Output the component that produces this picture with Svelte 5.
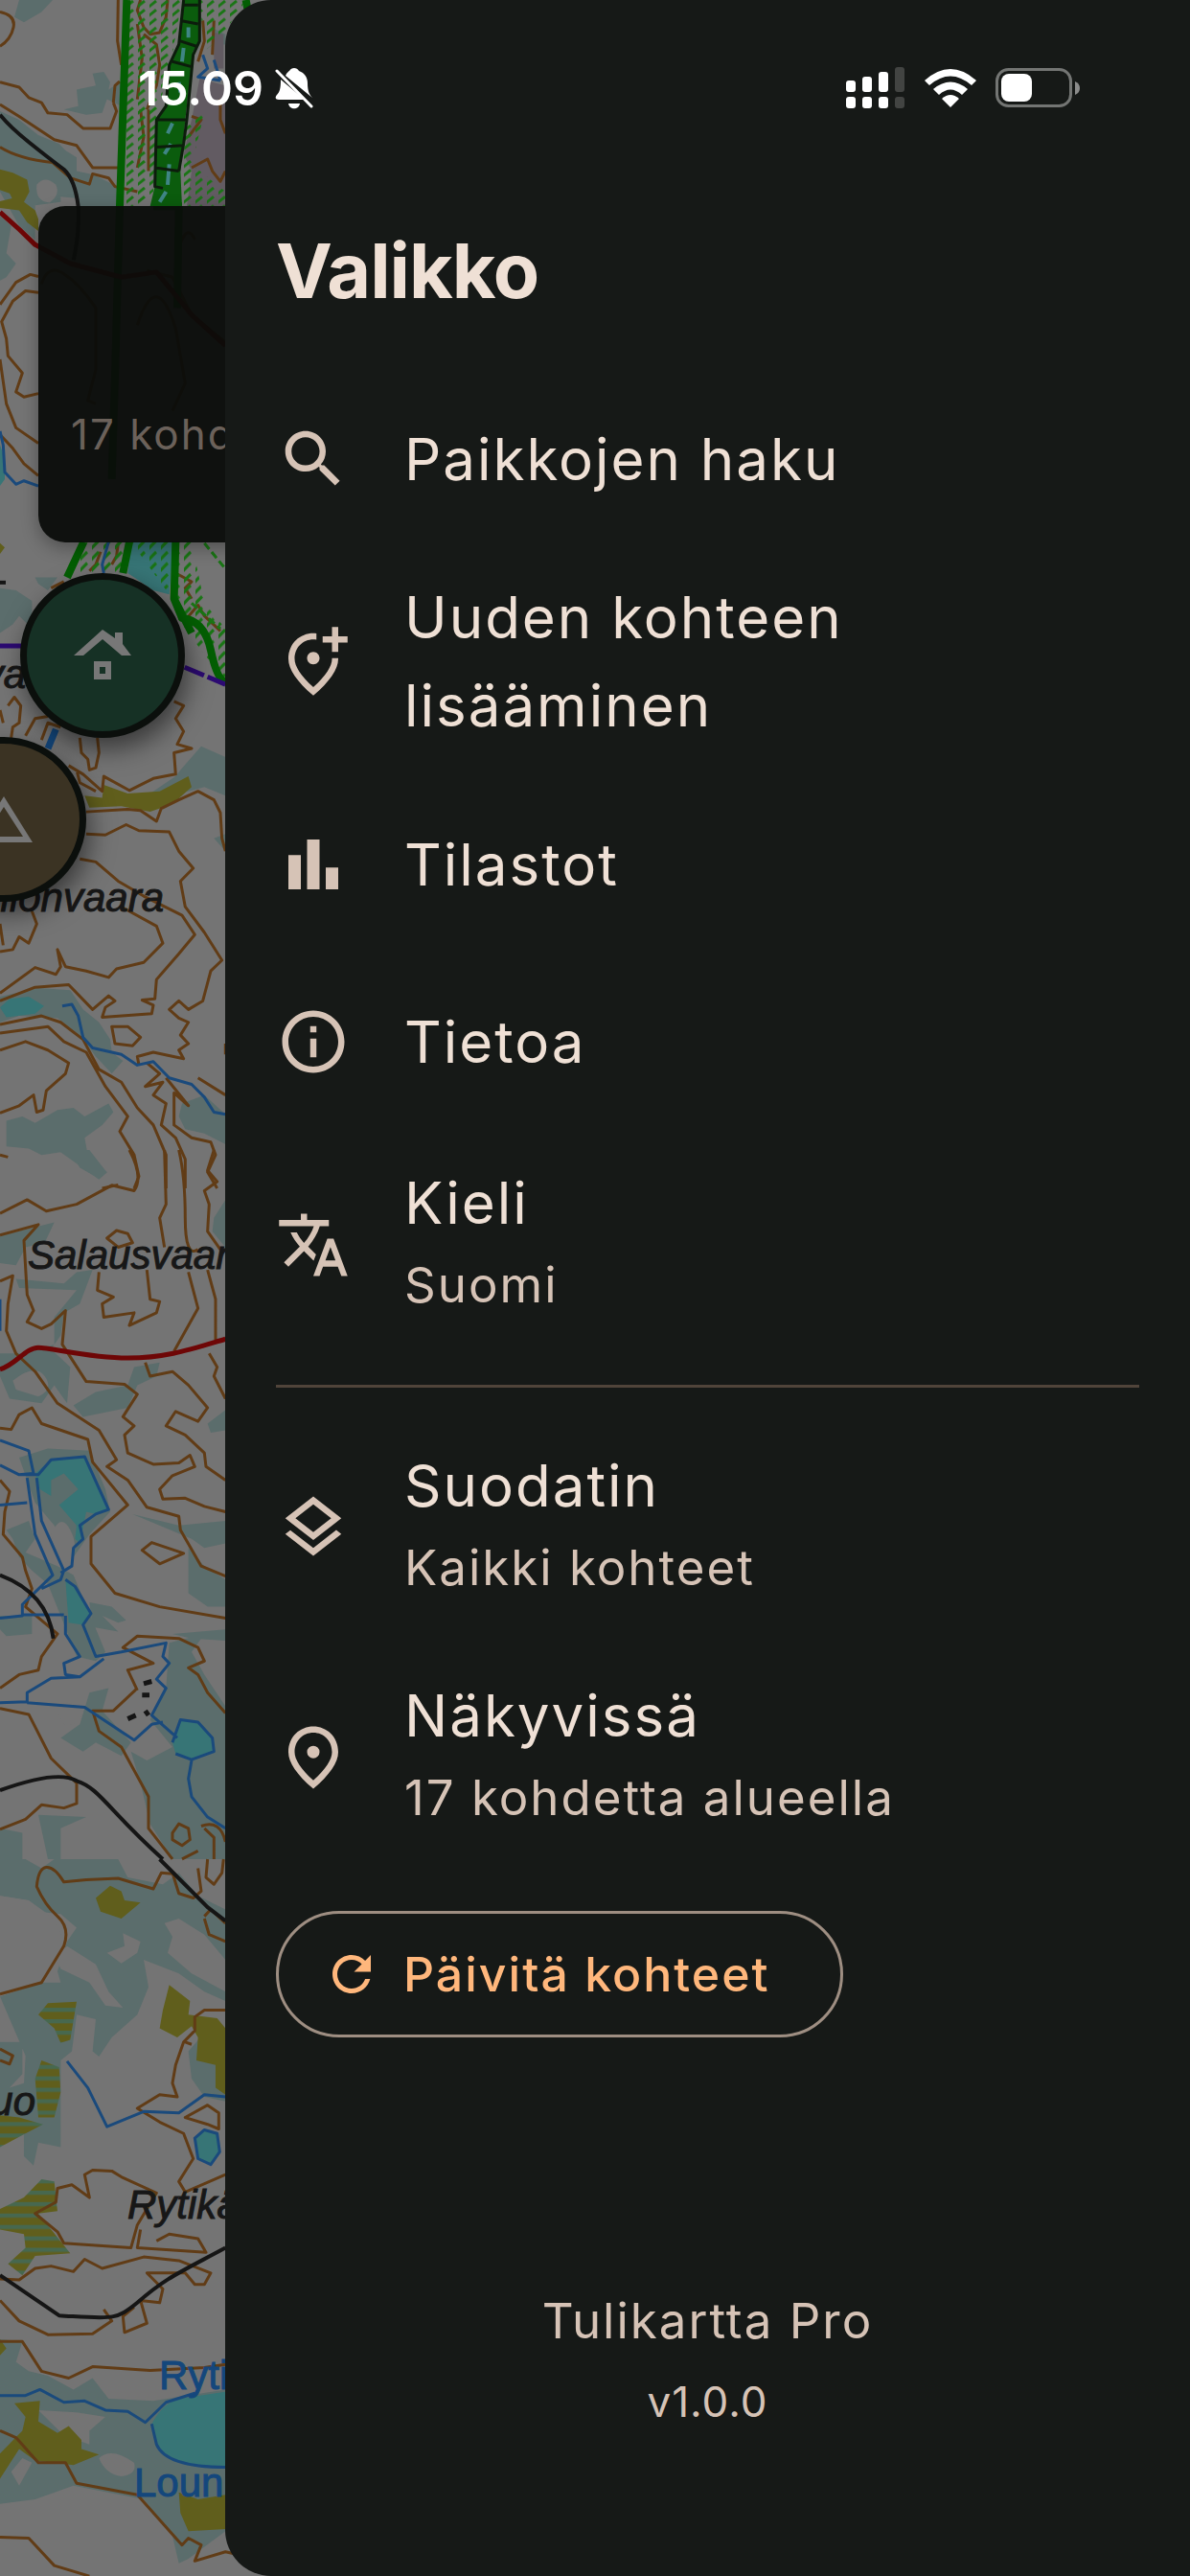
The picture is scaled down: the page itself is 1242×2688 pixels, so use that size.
<script lang="ts">
  interface MenuItem {
    label: string;
    sub?: string;
    icon: string;
  }

  interface MapShape {
    kind: string;
    d: string;
  }

  interface MapTile {
    y: number;
    sy: number;
    shapes: MapShape[];
  }

  const mainItems: MenuItem[] = [
    {
      label: 'Paikkojen haku',
      icon: 'M15.5 14h-.79l-.28-.27C15.41 12.59 16 11.11 16 9.5 16 5.91 13.09 3 9.5 3S3 5.91 3 9.5 5.91 16 9.5 16c1.61 0 3.09-.59 4.23-1.57l.27.28v.79l5 4.99L20.49 19l-4.99-5zm-6 0C7.01 14 5 11.99 5 9.5S7.01 5 9.5 5 14 7.01 14 9.5 11.99 14 9.5 14z'
    },
    {
      label: 'Uuden kohteen lisääminen',
      icon: 'M20 1v3h3v2h-3v3h-2V6h-3V4h3V1h2zm-8 12c1.1 0 2-.9 2-2s-.9-2-2-2-2 .9-2 2 .9 2 2 2zm1-9.94v2.02c-.33-.05-.66-.08-1-.08-3.35 0-6 2.57-6 6.2 0 2.34 1.95 5.44 6 9.14 4.05-3.7 6-6.79 6-9.14V11h2v.2c0 3.32-2.67 7.25-8 11.8-5.33-4.55-8-8.48-8-11.8C4 6.22 7.8 3 12 3c.34 0 .67.02 1 .06z'
    },
    { label: 'Tilastot', icon: 'M4 9h4v11H4zM16 13h4v7h-4zM10 4h4v16h-4z' },
    {
      label: 'Tietoa',
      icon: 'M11 7h2v2h-2zm0 4h2v6h-2zm1-9C6.48 2 2 6.48 2 12s4.48 10 10 10 10-4.48 10-10S17.52 2 12 2zm0 18c-4.41 0-8-3.59-8-8s3.59-8 8-8 8 3.59 8 8-3.59 8-8 8z'
    },
    {
      label: 'Kieli',
      sub: 'Suomi',
      icon: 'M12.87 15.07l-2.54-2.51.03-.03c1.74-1.94 2.98-4.17 3.71-6.53H17V4h-7V2H8v2H1v1.99h11.17C11.5 7.92 10.44 9.75 9 11.35 8.07 10.32 7.3 9.19 6.69 8h-2c.73 1.63 1.73 3.17 2.98 4.56l-5.09 5.02L4 19l5-5 3.11 3.11.76-2.04zM18.5 10h-2L12 22h2l1.12-3h4.75L21 22h2l-4.5-12zm-2.62 7l1.62-4.33L19.12 17h-3.24z'
    }
  ];

  const mapItems: MenuItem[] = [
    {
      label: 'Suodatin',
      sub: 'Kaikki kohteet',
      icon: 'M11.99 18.54l-7.37-5.73L3 14.07l9 7 9-7-1.63-1.27-7.38 5.74zM12 16l7.36-5.73L21 9l-9-7-9 7 1.63 1.27L12 16zm0-11.47L17.74 9 12 13.47 6.26 9 12 4.53z'
    },
    {
      label: 'Näkyvissä',
      sub: '17 kohdetta alueella',
      icon: 'M12 2c4.2 0 8 3.22 8 8.2 0 3.32-2.67 7.25-8 11.8-5.33-4.55-8-8.48-8-11.8C4 5.22 7.8 2 12 2zm6 8.2c0-3.57-2.61-6.2-6-6.2s-6 2.63-6 6.2c0 2.34 1.95 5.44 6 9.14 4.05-3.7 6-6.8 6-9.14zM12 12.2a2 2 0 100-4 2 2 0 000 4z'
    }
  ];

  const refreshIcon =
    'M17.65 6.35C16.2 4.9 14.21 4 12 4c-4.42 0-7.99 3.58-7.99 8s3.57 8 7.99 8c3.73 0 6.84-2.55 7.73-6h-2.08c-.82 2.33-3.04 4-5.65 4-3.31 0-6-2.69-6-6s2.69-6 6-6c1.66 0 3.14.69 4.22 1.78L13 11h7V4l-2.35 2.35z';

  // Map sheets, stacked from north to south. Units are a third of a pixel wide.
  const tiles: MapTile[] = [
    {
      y: 0,
      sy: 0.3571,
      shapes: [
        { kind: 'marsh', d: 'M60 0H165L130 35 75 65 45 50ZM240 262L300 250 290 215 325 210 345 240 340 262 380 238V310L335 290 320 330 270 335 200 320 245 310ZM0 325L60 350 120 395 185 420 205 440 240 460V500L290 510 380 550V603H245L245 580 190 575V590L110 600V700L60 660 0 560ZM0 630L35 660 20 740 50 770 20 810 0 820ZM660 80L706 100V130H680Z' },
        { kind: 'paper', d: 'M115 540Q140 510 175 540Q190 570 155 592Q110 590 115 540Z' },
        { kind: 'rock', d: 'M670 95L700 100V200H670ZM625 230L706 250V603H585L600 500 575 450 600 350Z' },
        { kind: 'field', d: 'M0 495L40 505 85 525 92 560 75 590 110 615 120 640V675L85 650 60 615 0 608V588L38 580 30 565 0 555Z' },
        { kind: 'contour', d: 'M0 35Q50 45 42 80T0 135M370 0L368 120 380 190M440 0L430 30 450 80 470 100 500 95 520 50 525 0M450 100L490 130 500 190 490 250 460 320M430 70L445 170 430 290M355 300L360 250 375 238M0 240L60 255 90 285 130 300 150 330 210 335 260 375 345 375 365 325 355 300M0 305L60 340 170 408 240 425 290 490 375 490M0 430Q60 465 165 475L220 520 280 538 290 508 340 520 360 545 430 560M635 60L640 120 620 180M670 60L665 160M690 290V350L706 390M600 340L630 350 590 400M600 490L650 465 665 500 690 530 706 500M440 320L450 400 430 490M465 320V500' },
        { kind: 'hatch', d: 'M400 0H570L535 180 490 340 480 560 430 603H378ZM625 0H770L720 70 690 110 640 150ZM580 360L640 330 600 480 706 560V603H570Z' },
        { kind: 'contour', d: 'M0 890L50 825 95 802 120 808M120 855L80 850 40 880 5 940 20 990 25 1040 70 1090 50 1145 75 1160 120 1150M0 1050L20 1180 50 1250 120 1295M0 1270L40 1310 75 1355 120 1390' },
        { kind: 'contour', d: 'M130 830Q150 770 200 800T300 900V1080L275 1170 300 1180M430 950Q490 780 550 960L580 1120 540 1200M460 790L540 810 600 920 706 1000M550 760Q580 640 610 700' },
        { kind: 'park', d: 'M397 0L385 330 375 603 360 1100 350 1400M770 0L775 25M480 603H570M560 603L555 900' },
        { kind: 'gorge', d: 'M575 0L560 130 530 190 520 310 490 350 485 545 470 603H570L565 500 580 350 605 150 625 120V0Z' },
        { kind: 'gorgewater', d: 'M590 80V110M575 140L570 180M560 240L565 270M540 360L525 390M535 420L515 450M530 480L525 540M520 560L500 590' },
        { kind: 'cliff', d: 'M575 0L560 130 530 190 520 310 490 350 485 545 510 550M625 0V120L605 160 585 350 575 420 560 500M570 15H620M565 60L620 70M565 120L615 135M540 180L600 195M490 350L585 350M490 430L575 425M485 490L560 500' },
        { kind: 'road', d: 'M0 335Q30 370 90 415T200 495Q235 525 245 603Q250 680 230 760' },
        { kind: 'main', d: 'M0 620L60 670 110 715 220 770 380 810 490 795 600 920 706 1010' },
        { kind: 'stream', d: 'M635 160L650 200 620 225 690 235M670 175L690 235' },
        { kind: 'lake', d: 'M0 1300L15 1340V1400L0 1420Z' },
        { kind: 'stream', d: 'M0 1260L10 1300 15 1380 50 1415 75 1405 120 1420' }
      ]
    },
    {
      y: 540,
      sy: 0.4464,
      shapes: [
        { kind: 'marsh', d: 'M0 165L50 170 100 195V260L60 230 40 250 0 270ZM110 140H180L150 170 120 155ZM565 590L630 535 706 560V650L640 630 590 640 460 650 550 605ZM670 750L706 740V780ZM0 1120L120 1100 220 1105 260 1150 310 1180 345 1220 350 1250 385 1270 350 1300 300 1260 250 1210 180 1170 60 1165 0 1180ZM20 1410L70 1400 110 1415 180 1385 230 1380 265 1400 340 1370 355 1390 320 1420 265 1450 275 1490 335 1530 310 1545 250 1520 220 1480 130 1490 90 1475 20 1470ZM570 1370L640 1350 706 1395V1465L640 1440 580 1430 560 1400Z' },
        { kind: 'field', d: 'M265 650L320 655 325 625 400 645 500 640 590 605 600 630 540 670 470 688 380 675 280 678ZM0 60L15 70 0 85Z' },
        { kind: 'lake', d: 'M410 57H545L530 180 480 170 400 130ZM0 1145L30 1125 90 1120 138 1142 110 1160 20 1168Z' },
        { kind: 'contour', d: 'M160 165L200 150M315 80L300 110 280 125M370 60L365 90 350 110M550 130L600 150 580 165 600 190M580 240L620 205 640 230 690 265' },
        { kind: 'hatch', d: 'M270 57H400L385 130H215ZM410 57H600L640 200 706 260V380L640 320 560 240 530 180Z' },
        { kind: 'park', d: 'M262 57L235 100 210 140M405 57L385 130M550 57L545 190 570 235Q640 240 660 310T706 385M545 190L600 270' },
        { kind: 'parkline', d: 'M640 60L706 120M600 200L690 260' },
        { kind: 'border', d: 'M0 300H66M578 350L706 390' },
        { kind: 'contour', d: 'M25 440L45 420 65 440 60 480 40 490 35 515M80 510L110 470 150 465M130 520L150 480 190 490M0 450L10 480M250 515L255 550 275 565 280 590 300 585 310 550 305 515M545 430L575 440 550 470 575 500 555 530 600 540 545 550 550 600 480 610 405 638 325 605 320 640 260 600 215 580M240 590L250 620 300 640' },
        { kind: 'contour', d: 'M270 688L400 682 440 685 490 710 505 680 560 660 620 640 670 660 690 690 695 750 706 780M270 740L330 742 395 718 435 732 530 735 560 780 605 820 565 850 580 910 640 970 695 1035 660 1060 635 1130 590 1150 560 1130 530 1150 560 1170 590 1180 565 1210 590 1230 560 1245 575 1265 480 1250 430 1260 435 1280' },
        { kind: 'contour', d: 'M250 798L300 805 370 850 450 885 570 930 610 975 560 1020 490 1080 485 1125 445 1128 480 1140 475 1160 320 1168 330 1145 360 1130 340 1118 290 1150 215 1092 110 1098 0 1130M380 910L490 955 510 995 450 1040 365 1055 340 1075 270 1060 205 1050 180 1010 190 1050 175 1068 110 1052 0 1112M100 920L115 950 90 995 60 980 40 1010 0 1015M0 950L10 1000' },
        { kind: 'contour', d: 'M0 1185L130 1165 190 1180 260 1220 310 1290 380 1320 430 1380 480 1420 520 1490V1568M0 1205L150 1190 200 1225 270 1250 330 1330 400 1400 375 1435 420 1490 435 1540 420 1568M0 1245L80 1225 150 1245 215 1275 205 1300 145 1340 135 1385 115 1390 105 1350 60 1375 0 1392M350 1190H400L440 1215 415 1235 360 1230ZM460 1275L500 1300 455 1330 510 1320 480 1350 520 1370 505 1420 550 1450 580 1500V1568M520 1310L590 1375 545 1345V1420L600 1450 660 1460 675 1490 650 1530 680 1568M620 1310L706 1350M706 1230V1255M0 1490L25 1495M320 1568L370 1560' },
        { kind: 'stream', d: 'M340 57L320 110 325 130M195 1142L225 1138 245 1165 260 1215 290 1240 380 1255 430 1280 480 1272 530 1310 600 1325 640 1355 670 1390 706 1395' },
        { kind: 'river', d: 'M175 495L150 540' },
        { kind: 'road', d: 'M0 152H18' }
      ]
    },
    {
      y: 1200,
      sy: 0.4719,
      shapes: [
        { kind: 'marsh', d: 'M180 0H280L335 50 310 65 250 35ZM0 190L170 160 140 205 80 215 50 255 0 250ZM50 285L200 295 240 270 290 265 250 340 200 360 190 410 160 440 220 480 210 560 170 520 130 560 30 550 0 500V450L70 450 170 430V370L240 310 60 305ZM230 565L300 535 400 520 420 480 500 470 490 500 430 520 400 570 260 590ZM706 110L670 150 665 180 706 215ZM650 605L706 575V620L660 625ZM20 840L90 820 110 860 80 890 180 920 230 940 330 1110 300 1130 240 1120 190 1030 150 960 100 930 60 900 40 860ZM60 680L150 660 280 665 330 750 345 800 280 850 230 900 170 830 110 780ZM415 805L560 830 706 820V870L640 880 600 860ZM590 880L640 920 706 950V1010L650 1010 590 980ZM280 1000L350 1010 395 1040 370 1045 320 1030 370 1065 290 1055ZM530 1090L640 1070 600 1110 640 1160 706 1230V1568H540L470 1490 440 1400 410 1330 460 1350 540 1320 470 1260 520 1190ZM0 1030L100 1030V1070L20 1075 0 1060ZM280 1200L340 1190 320 1240 410 1310 380 1340 300 1310 260 1330 190 1300 250 1270ZM0 1500L70 1510V1568H0ZM120 1470L270 1475 190 1500V1568H150ZM540 1070L706 1060V1085L600 1080Z' },
        { kind: 'paper', d: 'M160 850Q190 800 220 840T215 910L190 915ZM40 510Q110 470 140 500T120 545L50 530ZM170 1230Q220 1210 260 1240Q250 1275 200 1270Z' },
        { kind: 'lake', d: 'M110 715L160 685 265 678 340 795 300 805 270 800 250 870 235 860 240 830 185 785 245 750 200 715 160 730V765L125 750ZM205 950L235 965 285 1025 260 1050 215 1045 210 1000ZM540 1310L565 1260 620 1265 665 1300 670 1330 600 1348 550 1335Z' },
        { kind: 'contour', d: 'M405 0Q450 60 420 90L350 78 240 120 145 135 85 110 0 140M515 0L520 120 500 150 515 215M560 0Q580 60 580 150T620 220M670 0L650 45 680 70 640 90 655 120 650 180 690 220M0 188L120 165 75 200 85 320 105 355 85 380 130 395 160 385 205 355 195 430 270 512 390 518 430 540 385 590 420 610 390 630 400 670 480 695 560 692 595 675 610 700 540 720 500 750 510 772 580 770 640 788 706 800' },
        { kind: 'contour', d: 'M335 195L365 178 400 185 415 205 370 215ZM310 270L305 310 355 325 320 340 325 370 420 360 405 388 490 360 500 335 470 330 460 265M590 270L620 350 545 445M650 265L675 330V420M0 290L40 278 25 340 20 400 50 450 110 490 180 560 310 620 365 685 335 700 400 730 460 790 560 810 565 840 630 920 706 942' },
        { kind: 'contour', d: 'M455 470L470 500 540 490 590 520 650 570 620 600 550 578 520 610 580 630 640 670 645 700 706 730M655 450L680 480 670 500 706 550M0 615L35 618 60 585 100 570 130 605 275 640 290 690 400 785 285 855V915L360 980 500 1010 706 1035M445 885L475 868 575 892 500 915ZM0 730L30 755 15 800 10 850 70 900 80 930 100 970 80 1010 180 1070 130 1120 120 1150 60 1160 0 1190M0 1235L90 1248 160 1345 240 1400V1445L200 1455 130 1448 80 1480 0 1502' },
        { kind: 'contour', d: 'M430 1195L400 1150 480 1135 385 1100 430 1075 560 1080 620 1100 640 1130 590 1145 620 1160 650 1200 706 1245M430 1190L355 1240 290 1240 310 1285 380 1320 465 1430V1500L540 1568M540 1510L560 1490 590 1500 595 1525 570 1538 540 1525ZM570 1568L620 1550M630 1495Q690 1480 706 1530M640 1500L670 1520V1568' },
        { kind: 'stream', d: 'M0 642L90 665 105 715 60 718 0 697M0 785L85 780M65 718H120L160 685 265 678 340 795 300 805 250 830 260 860 230 880 225 920 190 935M85 725L110 850 165 940 70 1005V1030L0 1035M115 725L130 820 200 930 190 950 130 970M70 1028H200M205 950L235 965 285 1025 260 1050 300 1120 380 1110 520 1090 510 1120 530 1135 490 1170 520 1190 475 1250 555 1300M205 1030V1070L250 1120 200 1135 205 1160 250 1165 325 1125M250 1165L160 1168 85 1200V1220L0 1222M85 1222L265 1232 420 1305 475 1270 510 1265M540 1310L565 1260 620 1265 665 1300 670 1330 600 1348 550 1335M600 1350L590 1390 600 1430 650 1475 706 1500M0 330V400' },
        { kind: 'main', d: 'M0 485C50 475 80 437 120 437S280 460 400 460 600 440 706 418' },
        { kind: 'road', d: 'M0 940Q150 980 167 1080M0 1416Q180 1370 240 1395C310 1410 340 1460 510 1568' },
        { kind: 'rocks', d: 'M450 1180L475 1175M445 1205H468M400 1258L425 1250M455 1240L465 1250' }
      ]
    },
    {
      y: 1940,
      sy: 0.4771,
      shapes: [
        { kind: 'marsh', d: 'M0 0H80L130 20 170 0H370L400 40 510 55 560 30 620 80 706 110V310L640 290 560 250 450 220 465 280 430 340 350 390 310 432 290 420 300 350 240 340 225 420 190 440V590L190 630 120 620 105 670 75 650V600L0 620V400L70 400V470L30 500 75 490 80 430 0 300 130 270 190 270 180 245 210 180 240 150 190 120 120 115 90 90 0 80ZM590 420L640 380 706 500V530L640 520 600 480ZM0 1050L70 1055 50 1100 90 1120 150 1130 230 1160 290 1135 340 1180 480 1185 706 1160V1470L590 1530 560 1540 540 1480 450 1400 230 1370 110 1400 0 1410Z' },
        { kind: 'paper', d: 'M0 80L90 90 160 125 205 180 130 270 0 300ZM515 140L560 130 640 165 706 220V290L600 250 525 205 540 170ZM335 205L390 190 385 162 440 180 430 205 380 228ZM175 215L210 190 300 230 340 290 385 325 330 320 280 270 190 240ZM120 1205L240 1210 330 1220 280 1250V1280L200 1260ZM310 1310Q350 1285 420 1320Q430 1345 380 1350Q330 1345 310 1310ZM35 1340L70 1310 100 1320 60 1370Z' },
        { kind: 'field', d: 'M300 85L345 58 380 70 390 90 440 95 380 130 315 115ZM530 275L595 310 590 340 680 348 706 370V515L675 500V450L615 440 620 390 600 365 555 390 500 370 510 330ZM0 1050L20 1070 0 1085ZM45 1190L125 1185 120 1230 180 1255 215 1240 255 1270V1290L310 1302 230 1325 110 1315 60 1290 0 1355V1300L70 1250 80 1220ZM560 1385L620 1400 706 1390V1465L590 1470 565 1430Z' },
        { kind: 'wetfield', d: 'M120 340L150 315 240 312 220 395 190 402 170 370ZM130 440L185 455 190 510 170 565H120L110 480ZM0 560L60 565 135 580 80 600 0 630ZM0 765L75 740 130 700 170 705 180 770 120 775 220 862 110 868 70 910 25 885 80 850 75 820 0 810Z' },
        { kind: 'lake', d: 'M610 610L640 592 680 600 688 640 660 668 620 655ZM475 1235Q510 1190 560 1180L706 1165V1330L640 1330Q500 1320 490 1270Z' },
        { kind: 'contour', d: 'M0 295L130 270 200 190Q220 150 180 125T115 60Q120 20 145 18T200 50L270 45 370 42 480 65 505 30 540 32M540 30L560 75 605 85 630 70 620 20M640 125L660 110 706 140M640 130L655 165 706 180M650 0L645 40 670 55 695 30 700 0M0 415L40 430 30 448 0 440M0 918L60 920 110 895 160 890 230 902 265 875 320 895 450 870 560 878 660 905 640 930 610 930 580 905 460 905 510 940 500 970 440 965 460 1015 390 1035 385 1000 420 980' },
        { kind: 'contour', d: 'M706 330H640L610 345V375L575 400 550 450 540 490 555 520 500 515 430 545 500 575 575 600 605 655 560 705 580 728 706 690M580 565L650 538 685 555V590L650 580ZM600 405L580 400M110 775L175 750 180 720 225 712 280 740 265 690 290 680 350 682 380 695 490 730 430 800 410 850 200 840 180 815ZM490 835L530 820 620 830 645 860 430 850 440 810M0 965L60 1010 150 1040 290 1038 350 1010 325 985M0 1055L70 1055 130 1120 215 1135 290 1110 470 1118 640 1112 706 1105M0 1250L50 1265 120 1320 205 1320 240 1365 430 1390 570 1500 590 1485 630 1500 610 1535 706 1515 740 1520M0 1483L90 1485 170 1545 280 1568' },
        { kind: 'stream', d: 'M210 442L275 500 335 585 450 552 560 555 640 515 706 520M0 1173H80L125 1160 200 1188 265 1185 330 1205 400 1208 455 1232 520 1188 610 1168M475 1235L490 1280Q520 1330 706 1330M610 610L640 592 680 600 688 640 660 668 620 655Z' },
        { kind: 'road', d: 'M500 0L650 105 706 135M0 910L185 998C350 1005 360 1010 430 970C520 915 560 905 706 850' }
      ]
    }
  ];
</script>

{#snippet row(item: MenuItem)}
  <svg class="icon" viewBox="0 0 24 24" aria-hidden="true">
    <path d={item.icon} fill-rule="evenodd" />
  </svg>
  <span class="texts" class:stacked={item.sub}>
    <span class="label">{item.label}</span>
    {#if item.sub}
      <span class="sub">{item.sub}</span>
    {/if}
  </span>
{/snippet}

<div class="screen">
  <!-- Map behind the drawer -->
  <div class="map">
    <svg class="map-canvas" width="300" height="2688" viewBox="0 0 300 2688" aria-hidden="true">
      <defs>
        <pattern id="hatch" width="12" height="10" patternUnits="userSpaceOnUse" patternTransform="scale(3 2.6)">
          <path d="M-1 8L7 1" stroke="#197514" stroke-width="3" />
        </pattern>
        <pattern id="wet" width="20" height="25" patternUnits="userSpaceOnUse">
          <rect width="20" height="25" fill="#605e1c" />
          <rect width="20" height="9" fill="#47684f" />
        </pattern>
      </defs>
      {#each tiles as tile}
        <g transform="translate(0 {tile.y}) scale(0.3333 {tile.sy})">
          {#each tile.shapes as shape}
            <path class={shape.kind} d={shape.d} />
          {/each}
        </g>
      {/each}
      <g class="place">
        <text x="27" y="718" text-anchor="end">va</text>
        <text x="171" y="951" text-anchor="end">lionvaara</text>
        <text x="29" y="1324">Salausvaara</text>
        <text x="37" y="2207" text-anchor="end">uo</text>
        <text x="133" y="2315">Rytikä</text>
      </g>
      <g class="place water">
        <text x="166" y="2493">Ryti</text>
        <text x="140" y="2605">Loun</text>
      </g>
    </svg>

    <div class="map-card">17 kohdetta</div>

    <div class="marker hut">
      <svg width="60" height="54" viewBox="0 0 60 54" aria-hidden="true">
        <path d="M30 0L43 9V3H51V15L60 27H50L30 10 10 27H0Z" />
        <path d="M21 33H39V52H21ZM27 39V46H33V39Z" fill-rule="evenodd" />
      </svg>
    </div>
    <div class="marker lean-to">
      <svg width="60" height="48" viewBox="0 0 60 48" aria-hidden="true">
        <path d="M30 0L60 48H0ZM30 11L10 42H50Z" fill-rule="evenodd" />
      </svg>
    </div>
  </div>

  <!-- Drawer -->
  <aside class="drawer">
    <h1>Valikko</h1>

    <nav>
      {#each mainItems as item}
        <button class="item" class:tall={item.sub}>{@render row(item)}</button>
      {/each}
    </nav>

    <hr />

    <button class="item tall">{@render row(mapItems[0])}</button>
    <div class="item tall">{@render row(mapItems[1])}</div>

    <button class="refresh">
      <svg width="60" height="60" viewBox="0 0 24 24" aria-hidden="true">
        <path d={refreshIcon} />
      </svg>
      Päivitä kohteet
    </button>

    <footer>
      <span class="app-name">Tulikartta Pro</span>
      <span class="version">v1.0.0</span>
    </footer>
  </aside>

  <!-- Status bar -->
  <div class="status">
    <span class="time">15.09</span>
    <svg class="bell" width="40" height="44" viewBox="0 0 40 44" aria-hidden="true">
      <path d="M20 1C22 1 24 2 25 4C31 6 34 11 34 17C34 25 36 29 39 32L11 9C12 6 15 4 15 4C16 2 18 1 20 1Z" />
      <path d="M6 13L31 34H4C0 34 0 31 2 29C5 26 6 22 6 13Z" />
      <path d="M14 38H26C25 45 15 45 14 38Z" />
      <path d="M2 4L38 41" stroke="#fff" stroke-width="3" stroke-linecap="round" />
    </svg>
    <svg class="signal" width="62" height="44" viewBox="0 0 62 44" aria-hidden="true">
      <rect x="0" y="14" width="10" height="12" rx="3" />
      <rect x="17" y="10" width="10" height="16" rx="3" />
      <rect x="34" y="5" width="10" height="21" rx="3" />
      <rect class="off" x="51" y="0" width="10" height="26" rx="3" />
      <rect x="0" y="31" width="10" height="12" rx="3" />
      <rect x="17" y="31" width="10" height="12" rx="3" />
      <rect x="34" y="31" width="10" height="12" rx="3" />
      <rect class="off" x="51" y="31" width="10" height="12" rx="3" />
    </svg>
    <svg width="54" height="40" viewBox="0 0 54 40" aria-hidden="true">
      <path d="M0 12Q27 -12 54 12L49 17Q27 -2 5 17Z" />
      <path d="M9 21Q27 6 45 21L39 27Q27 16 15 27Z" />
      <path d="M18 31Q27 23 36 31L27 40Z" />
    </svg>
    <svg width="88" height="42" viewBox="0 0 88 42" aria-hidden="true">
      <rect x="1.5" y="1.5" width="77" height="38" rx="12" fill="none" stroke="#737573" stroke-width="3" />
      <rect x="6" y="6" width="32" height="29" rx="8" />
      <path d="M83 14Q88 16 88 21T83 28Z" fill="#8b8c8b" />
    </svg>
  </div>
</div>

<style>
  :global(body) {
    margin: 0;
    background: #747474;
  }

  .screen {
    position: relative;
    display: flex;
    min-height: 100vh;
    overflow: hidden;
    font-family: Inter, 'Liberation Sans', sans-serif;
    color: #efe0d5;
  }

  .map {
    position: absolute;
    inset: 0;
    overflow: hidden;
    background: #747474;
  }

  .map-canvas {
    display: block;
  }

  .map-canvas g path {
    fill: none;
    stroke-width: 3px;
    stroke-linejoin: round;
    vector-effect: non-scaling-stroke;
  }

  .map-canvas g .marsh { fill: #5b6d6c; }
  .map-canvas g .paper { fill: #747474; }
  .map-canvas g .rock { fill: #625b62; }
  .map-canvas g .field { fill: #605e1c; }
  .map-canvas g .wetfield { fill: url(#wet); }
  .map-canvas g .hatch { fill: url(#hatch); }
  .map-canvas g .lake { fill: #377576; }
  .map-canvas g .gorge { fill: #0b5c0d; }
  .map-canvas g .contour { stroke: #613c16; }
  .map-canvas g .stream { stroke: #1a4a7c; }
  .map-canvas g .river { stroke: #14477c; stroke-width: 7px; }
  .map-canvas g .gorgewater { stroke: #3f8585; stroke-width: 4px; }
  .map-canvas g .cliff { stroke: #0c1c0c; }
  .map-canvas g .park { stroke: #035e03; stroke-width: 8px; }
  .map-canvas g .parkline { stroke: #197514; stroke-dasharray: 8 4; }
  .map-canvas g .border { stroke: #2c0a72; stroke-width: 5px; stroke-dasharray: 22 4; }
  .map-canvas g .road { stroke: #151515; stroke-width: 4px; }
  .map-canvas g .main { stroke: #6e0606; stroke-width: 5px; }
  .map-canvas g .rocks { stroke: #151515; stroke-width: 5px; }

  .place {
    font: italic 42px 'Liberation Sans', sans-serif;
    fill: #171717;
    stroke: #171717;
    stroke-width: 1px;
  }

  .water {
    font-style: normal;
    fill: #14477c;
    stroke: #14477c;
  }

  .map-card {
    position: absolute;
    top: 215px;
    left: 40px;
    right: 40px;
    box-sizing: border-box;
    height: 351px;
    padding: 208px 34px 0;
    border-radius: 28px;
    background: rgba(9, 12, 9, 0.95);
    box-shadow: 0 6px 18px rgba(0, 0, 0, 0.3);
    color: #6b615a;
    font-size: 44px;
    line-height: 60px;
    letter-spacing: 2px;
  }

  .marker {
    position: absolute;
    display: flex;
    align-items: center;
    justify-content: center;
    box-sizing: border-box;
    width: 172px;
    height: 172px;
    border: 7px solid #0b0f0c;
    border-radius: 50%;
    box-shadow: 4px 12px 26px rgba(0, 0, 0, 0.5);
    fill: #777;
  }

  .hut {
    top: 598px;
    left: 21px;
    background: #163125;
  }

  .lean-to {
    top: 769px;
    left: -82px;
    background: #3b3323;
  }

  .drawer {
    position: relative;
    display: flex;
    flex: 1;
    flex-direction: column;
    box-sizing: border-box;
    min-width: 0;
    margin-left: 235px;
    padding: 234px 53px 140px;
    border-radius: 48px 0 0 48px;
    background: #161917;
  }

  h1 {
    margin: 0 0 56px;
    font-size: 79px;
    font-weight: 700;
    line-height: 96px;
    letter-spacing: -1px;
  }

  nav {
    display: flex;
    flex-direction: column;
  }

  .item {
    display: flex;
    align-items: center;
    gap: 56px;
    box-sizing: border-box;
    width: 100%;
    min-height: 185px;
    padding: 27px 0;
    border: 0;
    background: none;
    color: inherit;
    font-family: inherit;
    text-align: left;
  }

  .tall {
    min-height: 240px;
  }

  button {
    cursor: pointer;
  }

  .icon {
    flex: none;
    width: 78px;
    height: 78px;
    fill: #d6c3b6;
  }

  .texts {
    display: flex;
    flex: 1;
    flex-direction: column;
    max-width: 540px;
  }

  .stacked {
    padding-bottom: 8px;
  }

  .label {
    font-size: 60px;
    line-height: 92px;
    letter-spacing: 2px;
  }

  .sub {
    color: #d6c3b6;
    font-size: 51px;
    line-height: 80px;
    letter-spacing: 2px;
  }

  hr {
    flex: none;
    width: 100%;
    height: 3px;
    margin: 26px 0;
    border: 0;
    background: #50443a;
  }

  .refresh {
    display: flex;
    align-items: center;
    align-self: flex-start;
    gap: 24px;
    box-sizing: border-box;
    height: 132px;
    margin-top: 40px;
    padding: 0 73px 0 46px;
    border: 3px solid #9e8e82;
    border-radius: 66px;
    background: none;
    color: #ffb77c;
    fill: #ffb77c;
    font-family: inherit;
    font-size: 50px;
    font-weight: 500;
    letter-spacing: 2px;
  }

  footer {
    display: flex;
    flex-direction: column;
    margin-top: auto;
    color: #d6c3b6;
    text-align: center;
  }

  .app-name {
    font-size: 51px;
    line-height: 84px;
    letter-spacing: 2px;
  }

  .version {
    font-size: 44px;
    line-height: 84px;
    letter-spacing: 1px;
  }

  .status {
    position: absolute;
    top: 0;
    left: 0;
    right: 0;
    display: flex;
    align-items: center;
    gap: 20px;
    padding: 62px 115px 0 144px;
    color: #fff;
    fill: #fff;
  }

  .time {
    font-size: 50px;
    font-weight: 600;
    line-height: 60px;
  }

  .bell {
    margin-left: -8px;
  }

  .signal {
    margin-left: auto;
  }

  .off {
    fill: #424442;
  }
</style>
